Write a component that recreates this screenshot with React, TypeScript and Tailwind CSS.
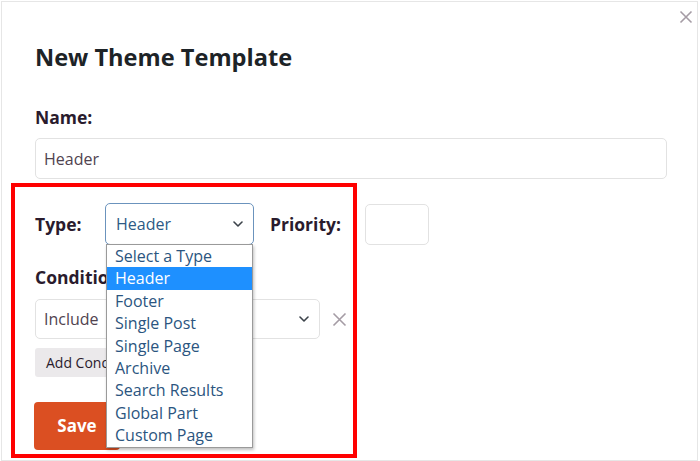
import React from "react";

const options = [
  "Select a Type",
  "Header",
  "Footer",
  "Single Post",
  "Single Page",
  "Archive",
  "Search Results",
  "Global Part",
  "Custom Page",
];

function Chevron({ className }: { className?: string }) {
  return (
    <svg width="10" height="6" viewBox="0 0 10 6" className={className} fill="none">
      <path d="M1 1l4 4 4-4" stroke="#3c434a" strokeWidth="1.6" strokeLinecap="round" strokeLinejoin="round" />
    </svg>
  );
}

export default function App() {
  return (
    <div
      className="w-[700px] h-[461px] bg-white pl-px pt-px pr-[2px] pb-0"
      style={{ fontFamily: '"Open Sans", "Noto Sans", sans-serif' }}
    >
      <div className="relative h-[460px] border border-[#e6e6e6] pl-[33px] pt-[40px]">
        {/* close */}
        <svg className="absolute right-[4px] top-[8px]" width="14" height="14" viewBox="0 0 14 14">
          <path d="M1.5 1.5l11 11M12.5 1.5l-11 11" stroke="#a59ca5" strokeWidth="1.6" />
        </svg>

        <h1 className="text-[23.6px] leading-[30px] font-bold text-[#1d2327]">New Theme Template</h1>

        <div className="mt-[33px] text-[17.5px] leading-[24px] font-bold text-[#2a1b2d]">Name:</div>
        <div className="mt-[9px] w-[632px] h-[41px] border border-[#e2e2e2] rounded-[5px] flex items-center pl-[8px] text-[16px] text-[#50434f]">
          Header
        </div>

        {/* Type row */}
        <div className="mt-[24px] flex items-center h-[42px]">
          <div className="w-[70px] text-[17.5px] font-bold text-[#2a1b2d]">Type:</div>
          <div className="relative w-[149px] h-[42px]">
            <div className="h-full border border-[#6b93bd] rounded-[5px] flex items-center justify-between pl-[10px] pr-[10px] text-[16px] text-[#2d5a85]">
              <span>Header</span>
              <Chevron />
            </div>
            <div className="absolute left-px top-[41px] w-[147px] bg-white border border-[#9a9a9a] shadow-[1px_2px_3px_rgba(0,0,0,0.25)] z-10">
              {options.map((o, i) => (
                <div
                  key={o}
                  className={
                    i === 1
                      ? "h-[22.4px] leading-[22.4px] pl-[8px] text-[16px] bg-[#1e90ff] text-white"
                      : "h-[22.4px] leading-[22.4px] pl-[8px] text-[16px] text-[#2b5580]"
                  }
                >
                  {o}
                </div>
              ))}
            </div>
          </div>
          <div className="ml-[16px] text-[17.5px] font-bold text-[#2a1b2d]">Priority:</div>
          <div className="ml-[24px] w-[64px] h-[41px] border border-[#e2e2e2] rounded-[5px]" />
        </div>

        <div className="mt-[20px] text-[17.5px] leading-[24px] font-bold text-[#2a1b2d]">Conditions:</div>
        <div className="mt-[10px] flex items-center">
          <div className="w-[285px] h-[40px] border border-[#e2e2e2] rounded-[5px] flex items-center justify-between pl-[8px] pr-[10px] text-[16px] text-[#50434f]">
            <span>Include</span>
            <Chevron />
          </div>
          <svg className="ml-[12px]" width="15" height="15" viewBox="0 0 15 15">
            <path d="M1.5 1.5l12 12M13.5 1.5l-12 12" stroke="#a59ca5" strokeWidth="1.6" />
          </svg>
        </div>
        <div className="mt-[9px] inline-flex items-center h-[29px] px-[11px] rounded-[3px] bg-[#ebe9eb] text-[14px] text-[#2a1b2d]">
          Add Condition
        </div>
        <div>
          <div className="mt-[25px] inline-flex items-center justify-center w-[86px] h-[48px] rounded-[4px] bg-[#db4f22] text-white text-[17px] font-bold -ml-px">
            Save
          </div>
        </div>

        {/* annotation */}
        <div className="absolute left-[9px] top-[181px] w-[346px] h-[275px] border-4 border-[#ff0000] pointer-events-none" />
      </div>
    </div>
  );
}
